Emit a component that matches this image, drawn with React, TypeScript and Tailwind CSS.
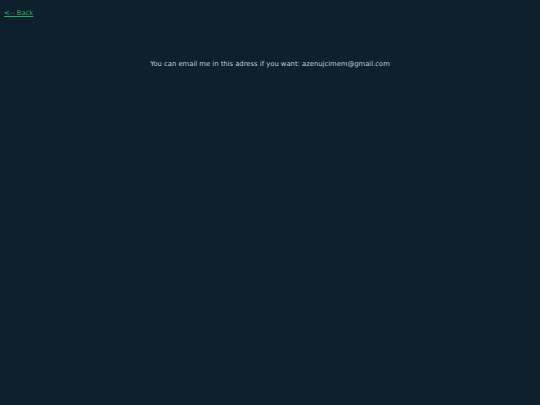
export default function App() {
	return (
		<div className="min-h-screen bg-[#0e1f2e] font-['DejaVu_Sans',sans-serif] text-[6.8px] leading-[10px]">
			<div className="px-1 pt-[8px]">
				<a href="#" className="text-[#27ad58] underline">
					&lt;-- Back
				</a>
			</div>
			<p className="mt-[41px] text-center text-[#c8ccd0]">
				You can email me in this adress if you want: azenujcimem@gmail.com
			</p>
		</div>
	);
}
